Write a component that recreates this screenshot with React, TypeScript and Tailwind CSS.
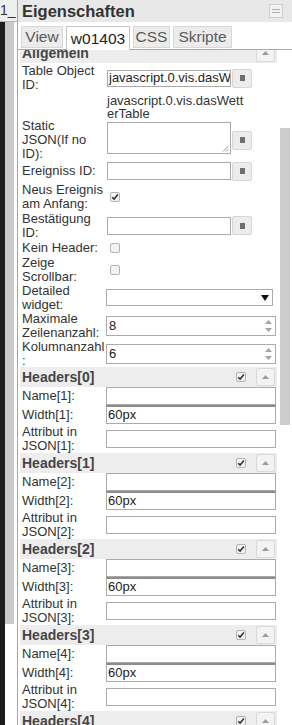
import type { ReactNode } from "react";

// Eigenschaften-Panel (vis editor) — Attribute des Table-Widgets w01403.

const HEADER_GROUPS = [0, 1, 2, 3, 4];

function Checkbox({ checked = false }: { checked?: boolean }) {
  return (
    <span className="flex h-[10px] w-[10px] items-center justify-center rounded-[2px] border border-[#b4b4b4] bg-[#f3f3f3]">
      {checked ? (
        <svg width="8" height="8" viewBox="0 0 8 8" aria-hidden="true">
          <path d="M1.2 4.2 L3.1 6.1 L6.9 1.6" fill="none" stroke="#333" strokeWidth="1.6" />
        </svg>
      ) : null}
    </span>
  );
}

function PickButton() {
  return (
    <span className="ml-[1px] flex h-[19px] w-[20px] items-center justify-center rounded-[2px] border border-[#d6d6d6] bg-[#ececec]">
      <span className="h-[6px] w-[5px] bg-[#6f6f6f]" />
    </span>
  );
}

function UpButton() {
  return (
    <span className="flex h-[18px] w-[19px] items-center justify-center rounded-[2px] border border-[#d9d9d9] bg-[#f3f3f3]">
      <svg width="7" height="4" viewBox="0 0 7 4" aria-hidden="true">
        <path d="M0 4 L3.5 0 L7 4 Z" fill="#9a9a9a" />
      </svg>
    </span>
  );
}

function Row({
  height,
  label,
  children
}: {
  height: string;
  label: ReactNode;
  children?: ReactNode;
}) {
  return (
    <div className={`flex shrink-0 items-center ${height}`}>
      <div className="w-[86px] shrink-0 pl-[2px] pr-[2.5px] leading-[14px]">{label}</div>
      <div className="flex items-center">{children}</div>
    </div>
  );
}

function Bar({ title }: { title: string }) {
  return (
    <div className="flex h-[20px] shrink-0 items-center bg-[#ededed] pl-[2px] pr-[2px]">
      <span className="flex-1 text-[14px] font-bold text-[#454545]">{title}</span>
      <Checkbox checked />
      <span className="ml-[10px]">
        <UpButton />
      </span>
    </div>
  );
}

function HeaderGroup({ index }: { index: number }) {
  const n = index + 1;
  return (
    <div className="flex shrink-0 flex-col">
      <Bar title={`Headers[${index}]`} />
      <Row height="h-[18px]" label={`Name[${n}]:`}>
        <div className="h-[18px] w-[170px] border border-[#aaaaaa] bg-white" />
      </Row>
      <Row height="h-[19px]" label={`Width[${n}]:`}>
        <div className="flex h-[19px] w-[170px] items-center border border-t-2 border-[#aaaaaa] border-t-[#8c8c8c] bg-white pl-[1px] text-[13px] text-[#222]">
          60px
        </div>
      </Row>
      <Row height="h-[29px]" label={`Attribut in JSON[${n}]:`}>
        <div className="h-[18px] w-[170px] border border-[#aaaaaa] bg-white" />
      </Row>
    </div>
  );
}

function NumberField({ value }: { value: string }) {
  return (
    <div className="flex h-[20px] w-[170px] items-center border border-[#aaaaaa] bg-white">
      <span className="flex-1 pl-[2px] text-[13px] text-[#222]">{value}</span>
      <span className="mr-[1px] flex h-[16px] w-[12px] flex-col items-center justify-around">
        <svg width="7" height="4" viewBox="0 0 7 4" aria-hidden="true">
          <path d="M0 4 L3.5 0 L7 4 Z" fill="#a3a3a3" />
        </svg>
        <svg width="7" height="4" viewBox="0 0 7 4" aria-hidden="true">
          <path d="M0 0 L3.5 4 L7 0 Z" fill="#a3a3a3" />
        </svg>
      </span>
    </div>
  );
}

function LeftStrip() {
  return (
    <div className="flex w-[17px] shrink-0 flex-col">
      <div className="flex h-[22px] shrink-0 items-center overflow-hidden border-b border-[#b5b5b5] bg-[#efefef] text-[14px] text-[#333]">
        1_
      </div>
      <div className="flex flex-1">
        <div className="w-[5px] bg-[#1d1d1d]" />
        <div className="flex w-[12px] flex-col bg-white">
          <div className="h-[602px] w-[9px] bg-[#c9c9c9]" />
        </div>
      </div>
    </div>
  );
}

export default function App() {
  return (
    <div className="flex h-[725px] w-[292px] overflow-hidden bg-white font-['Liberation_Sans',Arial,sans-serif] text-[13px] text-[#333]">
      <LeftStrip />
      <div className="flex w-[275px] flex-col border-l border-[#a6a6a6]">
        {/* Titel */}
        <div className="flex h-[22px] shrink-0 items-center justify-between bg-[#e8e8e8] pl-[4px] pr-[9px]">
          <span className="text-[16.5px] font-bold text-[#333]">Eigenschaften</span>
          <span className="flex h-[14px] w-[14px] flex-col items-center justify-center gap-[2px] border border-[#cfcfcf] bg-[#f2f2f2]">
            <span className="h-px w-[8px] bg-[#b0b0b0]" />
            <span className="h-px w-[8px] bg-[#b0b0b0]" />
          </span>
        </div>

        {/* Tabs */}
        <div className="flex h-[28px] shrink-0 items-end gap-[3px] border-b border-[#a9a9a9] pl-[3px] text-[15.5px]">
          <span className="mb-[1px] flex h-[22px] w-[42px] items-center justify-center border border-[#d8d8d8] bg-[#ececec] text-[#5a5a5a]">
            View
          </span>
          <span className="-mb-px flex h-[24px] w-[64px] items-center justify-center border border-b-0 border-[#c6c6c6] bg-white text-[#222]">
            w01403
          </span>
          <span className="mb-[1px] flex h-[22px] w-[37px] items-center justify-center border border-[#d8d8d8] bg-[#ececec] text-[#5a5a5a]">
            CSS
          </span>
          <span className="mb-[1px] flex h-[22px] w-[59px] items-center justify-center border border-[#d8d8d8] bg-[#ececec] text-[#5a5a5a]">
            Skripte
          </span>
        </div>

        {/* Inhalt + Scrollbar */}
        <div className="flex flex-1 overflow-hidden">
          <div className="flex w-[259px] shrink-0 flex-col pl-[2px]">
            <div className="h-[13px] shrink-0 overflow-hidden">
              <div className="-mt-[7px] flex h-[20px] items-center bg-[#ededed] pl-[2px] pr-[2px]">
                <span className="flex-1 text-[14px] font-bold text-[#454545]">Allgemein</span>
                <UpButton />
              </div>
            </div>

            <Row height="h-[30px]" label="Table Object ID:">
              <div className="ml-[1px] flex h-[17px] w-[124px] items-center overflow-hidden whitespace-nowrap border border-[#aaaaaa] bg-white pl-[1px] text-[#222]">
                javascript.0.vis.dasWetterTable
              </div>
              <PickButton />
            </Row>
            <Row height="h-[27px]" label="">
              <div className="ml-[1px] w-[142px] break-all leading-[13px] text-[#333]">
                javascript.0.vis.dasWetterTable
              </div>
            </Row>
            <Row height="h-[40px]" label={<span className="leading-[13.5px]">Static JSON(If no ID):</span>}>
              <div className="relative mb-[4px] ml-[1px] h-[32px] w-[124px] border border-[#aaaaaa] bg-white">
                <svg className="absolute bottom-[1px] right-[1px]" width="7" height="7" viewBox="0 0 7 7" aria-hidden="true">
                  <path d="M6.5 1 L1 6.5 M6.5 4 L4 6.5" stroke="#9a9a9a" strokeWidth="1" />
                </svg>
              </div>
              <PickButton />
            </Row>
            <Row height="h-[22px]" label="Ereigniss ID:">
              <div className="ml-[1px] h-[18px] w-[124px] border border-[#aaaaaa] bg-white" />
              <PickButton />
            </Row>
            <Row height="h-[29px]" label="Neus Ereignis am Anfang:">
              <span className="ml-[4px]">
                <Checkbox checked />
              </span>
            </Row>
            <Row height="h-[29px]" label="Bestätigung ID:">
              <div className="ml-[1px] h-[18px] w-[124px] border border-[#aaaaaa] bg-white" />
              <PickButton />
            </Row>
            <Row height="h-[16px]" label="Kein Header:">
              <span className="ml-[4px]">
                <Checkbox />
              </span>
            </Row>
            <Row height="h-[28px]" label="Zeige Scrollbar:">
              <span className="ml-[4px]">
                <Checkbox />
              </span>
            </Row>
            <Row height="h-[27px]" label="Detailed widget:">
              <div className="flex h-[17px] w-[167px] items-center justify-end border border-[#aaaaaa] bg-white pr-[3px]">
                <svg width="8" height="6" viewBox="0 0 8 6" aria-hidden="true">
                  <path d="M0 0 L8 0 L4 6 Z" fill="#111" />
                </svg>
              </div>
            </Row>
            <Row height="h-[29px]" label="Maximale Zeilenanzahl:">
              <NumberField value="8" />
            </Row>
            <Row height="h-[27px]" label="Kolumnanzahl :">
              <NumberField value="6" />
            </Row>

            {HEADER_GROUPS.map((i) => (
              <HeaderGroup key={i} index={i} />
            ))}
          </div>
          <div className="w-[3px] shrink-0" />
          <div className="flex w-[10px] shrink-0 flex-col">
            <div className="mt-[78px] h-[297px] bg-[#cdcdcd]" />
          </div>
        </div>
      </div>
    </div>
  );
}
